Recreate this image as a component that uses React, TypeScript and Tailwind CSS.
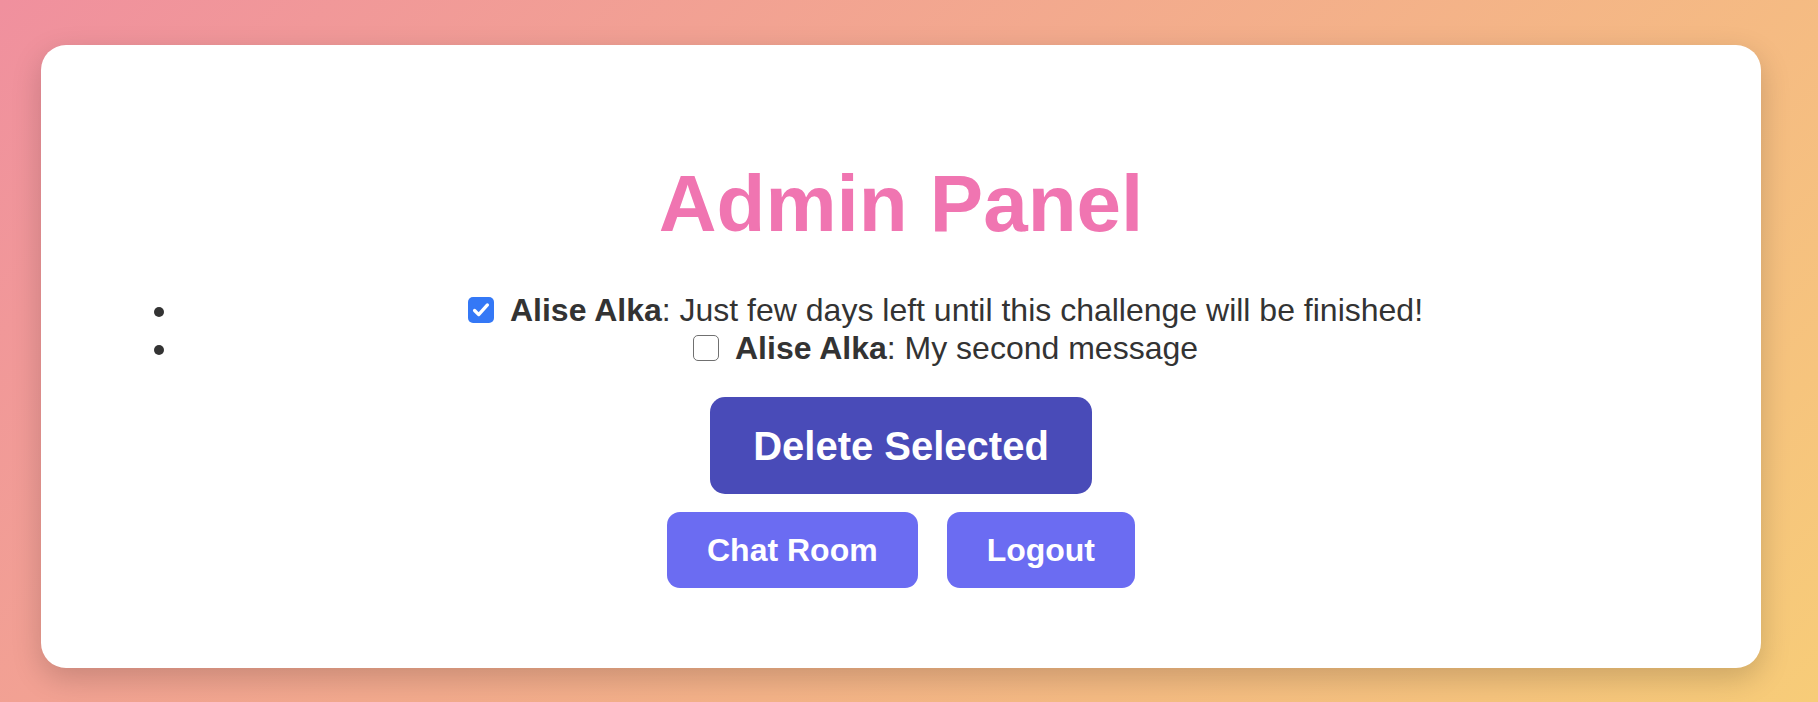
const messages = [
  { id: 1, user: 'Alise Alka', text: 'Just few days left until this challenge will be finished!', checked: true },
  { id: 2, user: 'Alise Alka', text: 'My second message', checked: false },
];

function Checkbox({ checked }: { checked: boolean }) {
  return (
    <span
      className={`relative inline-flex w-[26px] h-[26px] shrink-0 items-center justify-center rounded-[5px] ${
        checked ? 'bg-[#3478f6]' : 'bg-white border-[1.5px] border-[#707070]'
      }`}
    >
      <input type="checkbox" defaultChecked={checked} className="absolute inset-0 opacity-0 cursor-pointer" />
      {checked && (
        <svg viewBox="0 0 24 24" className="w-[22px] h-[22px]" fill="none" stroke="white" strokeWidth="3.6" strokeLinecap="round" strokeLinejoin="round">
          <path d="M5 12.5l4.5 4.5L19 6.5" />
        </svg>
      )}
    </span>
  );
}

export default function App() {
  return (
    <div className="w-full h-[702px] overflow-hidden bg-[linear-gradient(135deg,#f0909e_0%,#f7cc78_100%)] pt-[45px] pl-[41px] font-['Liberation_Sans',Arial,sans-serif]">
      <div className="w-[1720px] h-[623px] bg-white rounded-[25px] shadow-[0_10px_30px_rgba(0,0,0,0.18)] flex flex-col items-center pt-[119px]">
        <h1 className="text-[80px] leading-[80px] font-bold text-[#f075b1]">Admin Panel</h1>

        <ul className="self-stretch ml-[99px] mr-[50px] pl-[40px] mt-[47px] list-disc text-[#333] text-[32px] leading-[38px]">
          {messages.map((m) => (
            <li key={m.id} className="text-center">
              <label className="inline-flex items-center gap-[16px] align-top h-[38px]">
                <Checkbox checked={m.checked} />
                <span>
                  <strong className="font-bold">{m.user}</strong>: {m.text}
                </span>
              </label>
            </li>
          ))}
        </ul>

        <button className="mt-[30px] w-[382px] h-[97px] rounded-[15px] bg-[#494bb8] text-white text-[40px] font-bold leading-none">
          Delete Selected
        </button>

        <div className="mt-[18px] flex gap-[29px]">
          <button className="h-[76px] px-10 rounded-[13px] bg-[#6b6cf2] text-white text-[32px] font-bold leading-none">
            Chat Room
          </button>
          <button className="h-[76px] px-10 rounded-[13px] bg-[#6b6cf2] text-white text-[32px] font-bold leading-none">
            Logout
          </button>
        </div>
      </div>
    </div>
  );
}
